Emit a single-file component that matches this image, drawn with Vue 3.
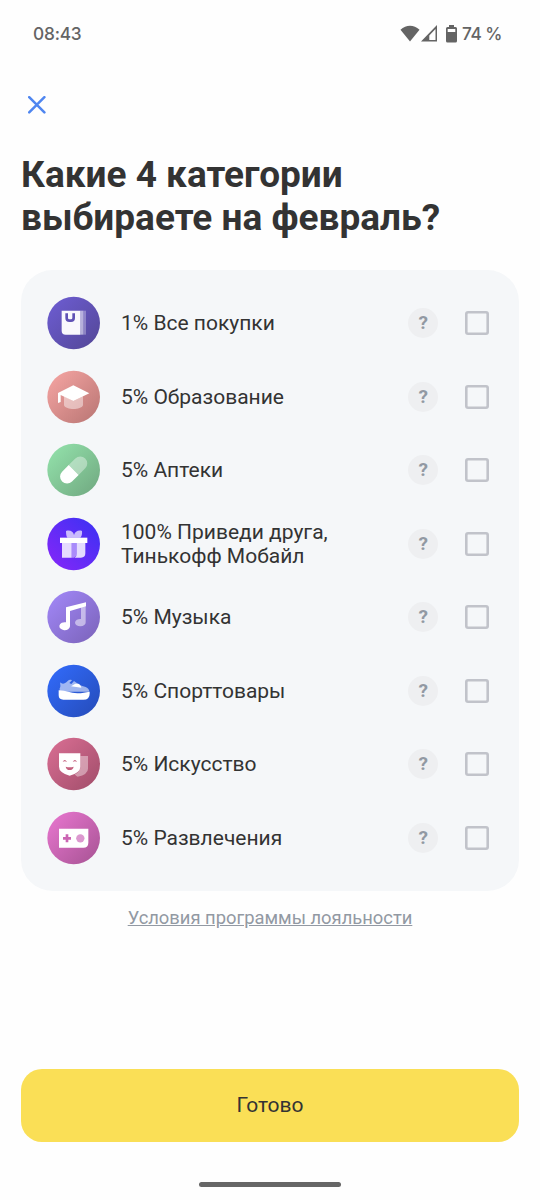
<script setup>
const rows = [
  { icon: 'bag', text: '1% Все покупки', from: '#6a5acb', to: '#574a9f' },
  { icon: 'cap', text: '5% Образование', from: '#ee9f9d', to: '#c17c7a' },
  { icon: 'pill', text: '5% Аптеки', from: '#8fdba6', to: '#75b086' },
  { icon: 'gift', text: '100% Приведи друга, Тинькофф Мобайл', from: '#7c28f8', to: '#4530f4', flip: true },
  { icon: 'music', text: '5% Музыка', from: '#9d83f0', to: '#8068c2' },
  { icon: 'shoe', text: '5% Спорттовары', from: '#3067f3', to: '#2750c2' },
  { icon: 'mask', text: '5% Искусство', from: '#d26a8e', to: '#a95270' },
  { icon: 'game', text: '5% Развлечения', from: '#e072c8', to: '#b0589c' },
]
</script>

<template>
  <main class="screen">
    <header class="status">
      <span class="time">08:43</span>
      <span class="indicators">
        <svg class="wifi" viewBox="0 0 20 17"><path d="M.5 4.7C6.2-.5 13.800-.5 19.500 4.700L10 16.500Z" fill="#646464" /></svg>
        <svg class="signal" viewBox="0 0 16 17"><path d="M16 0V16.500H0ZM14.500 4L8.300 10.500V15H14.500Z" fill="#646464" fill-rule="evenodd" /></svg>
        <svg class="battery" viewBox="0 0 11 18"><path d="M3 0H8V2H9.500Q11 2 11 3.500V16Q11 17.500 9.500 17.500H1.500Q0 17.500 0 16V3.500Q0 2 1.500 2H3ZM1.700 4V7H9.300V4Z" fill="#646464" fill-rule="evenodd" /></svg>
        <span class="percent">74 %</span>
      </span>
    </header>

    <button class="close" aria-label="Закрыть">
      <svg viewBox="0 0 18 18"><path d="M1.200 1.200L16.400 16.400M16.400 1.200L1.200 16.400" fill="none" stroke="#4f86f0" stroke-width="2.500" stroke-linecap="round" /></svg>
    </button>

    <h1>Какие 4 категории<br />выбираете на февраль?</h1>

    <section class="card">
      <div v-for="row in rows" :key="row.icon" class="row">
        <svg class="icon" viewBox="-1 -2 162 162">
          <defs>
            <linearGradient :id="'bg-' + row.icon" x1="0.15" :y1="row.flip ? 0.85 : 0.15" x2="0.85" :y2="row.flip ? 0.15 : 0.85">
              <stop offset="0" :stop-color="row.from" />
              <stop offset="1" :stop-color="row.to" />
            </linearGradient>
          </defs>
          <circle cx="79" cy="79" r="79" :fill="`url(#bg-${row.icon})`" />

          <g v-if="row.icon === 'bag'" fill="#fff">
            <path d="M43 42H99V114H55Q43 114 43 102Z" opacity=".96" />
            <rect x="99" y="42" width="9" height="72" opacity=".55" />
            <rect x="108" y="42" width="8" height="72" opacity=".3" />
            <path d="M58 50V64Q58 72 66 72H71Q79 72 79 64V50" fill="none" stroke="#6052b5" stroke-width="8" />
          </g>

          <g v-else-if="row.icon === 'cap'" fill="#fff">
            <path d="M50 76L78 91L107 76V104C101 119 56 119 50 104Z" opacity=".45" />
            <path d="M78 44L126 68L78 91L40 73V94L32 97V67Z" />
          </g>

          <g v-else-if="row.icon === 'pill'" fill="#fff" transform="rotate(-45 79 79)">
            <path d="M79 58H51A21 21 0 0 0 51 100H79Z" />
            <path d="M79 58H107A21 21 0 0 1 107 100H79Z" opacity=".38" />
          </g>

          <g v-else-if="row.icon === 'gift'" fill="#fff">
            <path d="M80 60H60C57 56 56 49 56 40C68 36 78 42 80 52C83 42 93 36 104 40C105 50 103 56 99 60Z" opacity=".68" />
            <rect x="38" y="60" width="82" height="16" />
            <path d="M44 76H73V120H44ZM88 76H114V107Q114 120 101 120H82Q88 117 88 110Z" opacity=".83" />
            <path d="M73 76H88V110Q88 118 80 120H73Z" opacity=".45" />
          </g>

          <g v-else-if="row.icon === 'music'" fill="#fff">
            <path d="M101 43L115 38V95A16 11 0 1 1 101 85Z" opacity=".5" />
            <path d="M56 50L116 35V47L68 61V107A16 12 0 1 1 56 95Z" />
          </g>

          <g v-else-if="row.icon === 'shoe'" fill="#fff">
            <path d="M39 53C46 61 52 57 61 49C65 46 68 44 74 47L66 55L72 58L80 49L97 61C106 66 126 66 126 81H37V71C42 64 37 59 39 53Z" opacity=".55" />
            <path d="M71 65L84 57H93C99 60 102 65 102 69Z" />
            <path d="M34 77C58 77 68 86 90 86C105 86 114 82 127 81V87Q127 105 108 105H48Q34 105 34 92Z" />
          </g>

          <g v-else-if="row.icon === 'mask'" fill="#fff">
            <path d="M99 55H122V93Q122 110 91 117Q86 115 82 110Q99 102 99 87Z" opacity=".4" />
            <path d="M35 47H99V87Q99 105 67 114Q35 105 35 87Z" />
            <path d="M46 73Q52 61 59 73Q52 69 46 73ZM76 73Q83 61 89 73Q83 69 76 73ZM55 87Q67 91 79 87Q77 97 67 97Q57 97 55 87Z" fill="#c4617f" />
          </g>

          <g v-else>
            <path d="M35 51H123V93Q123 108 108 108H35Z" fill="#fff" />
            <path d="M59 68V92M47 80H71" stroke="#cb65b3" stroke-width="8" />
            <circle cx="99" cy="80" r="12.500" fill="#dc98cf" />
          </g>
        </svg>
        <span class="label">{{ row.text }}</span>
        <button class="help">?</button>
        <span class="check"></span>
      </div>
    </section>

    <a class="terms">Условия программы лояльности</a>
    <button class="done">Готово</button>
    <div class="home"></div>
  </main>
</template>

<style>
body { background: #fefefe; }
</style>

<style scoped>
.screen {
  box-sizing: border-box;
  width: 540px;
  height: 1200px;
  padding: 0 21px;
  display: flex;
  flex-direction: column;
  overflow: hidden;
  background: #fefefe;
  color: #333;
  font-family: Roboto, "Liberation Sans", sans-serif;
}
button {
  border: 0;
  padding: 0;
  margin: 0;
  font-family: inherit;
}
.status {
  box-sizing: border-box;
  height: 68px;
  flex: none;
  display: flex;
  justify-content: space-between;
  align-items: center;
  padding: 0 17px 1px 12px;
  color: #646464;
  font: 500 17.300px Inter, sans-serif;
}
.time { letter-spacing: -0.2px; }
.indicators { display: flex; align-items: center; }
.wifi { width: 20px; height: 17px; }
.signal { width: 16px; height: 17px; margin-left: 1px; }
.battery { width: 11px; height: 18px; margin: 0 5px 0 9px; }
.percent { letter-spacing: -0.5px; }
.close {
  align-self: flex-start;
  width: 18px;
  height: 18px;
  margin: 28px 0 0 7px;
  background: none;
}
.close svg { display: block; width: 18px; height: 18px; }
h1 {
  margin: 38.500px 0 0;
  font-size: 37px;
  line-height: 43.300px;
  font-weight: 700;
  white-space: nowrap;
}
.card {
  box-sizing: border-box;
  margin-top: 31.200px;
  height: 620.700px;
  flex: none;
  padding: 16.400px 30.400px 0 26px;
  border-radius: 31.500px;
  background: #f5f7f9;
}
.row { height: 73.500px; display: flex; align-items: center; }
.icon { width: 54px; height: 54px; flex: none; }
.label {
  width: 240px;
  margin-left: 20px;
  padding-top: 0.4px;
  font-size: 21px;
  line-height: 24.600px;
}
.help {
  width: 30px;
  height: 30px;
  margin-left: auto;
  border-radius: 50%;
  background: #eeeff1;
  color: #9299a3;
  font-size: 19px;
  font-weight: 700;
  line-height: 30px;
}
.check {
  width: 24px;
  height: 24px;
  margin-left: 26.300px;
  border-radius: 3px;
  box-shadow: inset 0 0 0 2.600px #c1c3ca;
}
.terms {
  align-self: center;
  margin-top: 15px;
  color: #9299a3;
  font-size: 18.370px;
  line-height: 24px;
  text-decoration: underline;
}
.done {
  height: 73.500px;
  flex: none;
  margin-top: auto;
  border-radius: 21px;
  background: #fadf56;
  color: #333;
  font-size: 21px;
}
.home {
  width: 142px;
  height: 5.500px;
  flex: none;
  align-self: center;
  margin: 39.500px 0 13px;
  border-radius: 3px;
  background: #666;
}
</style>
